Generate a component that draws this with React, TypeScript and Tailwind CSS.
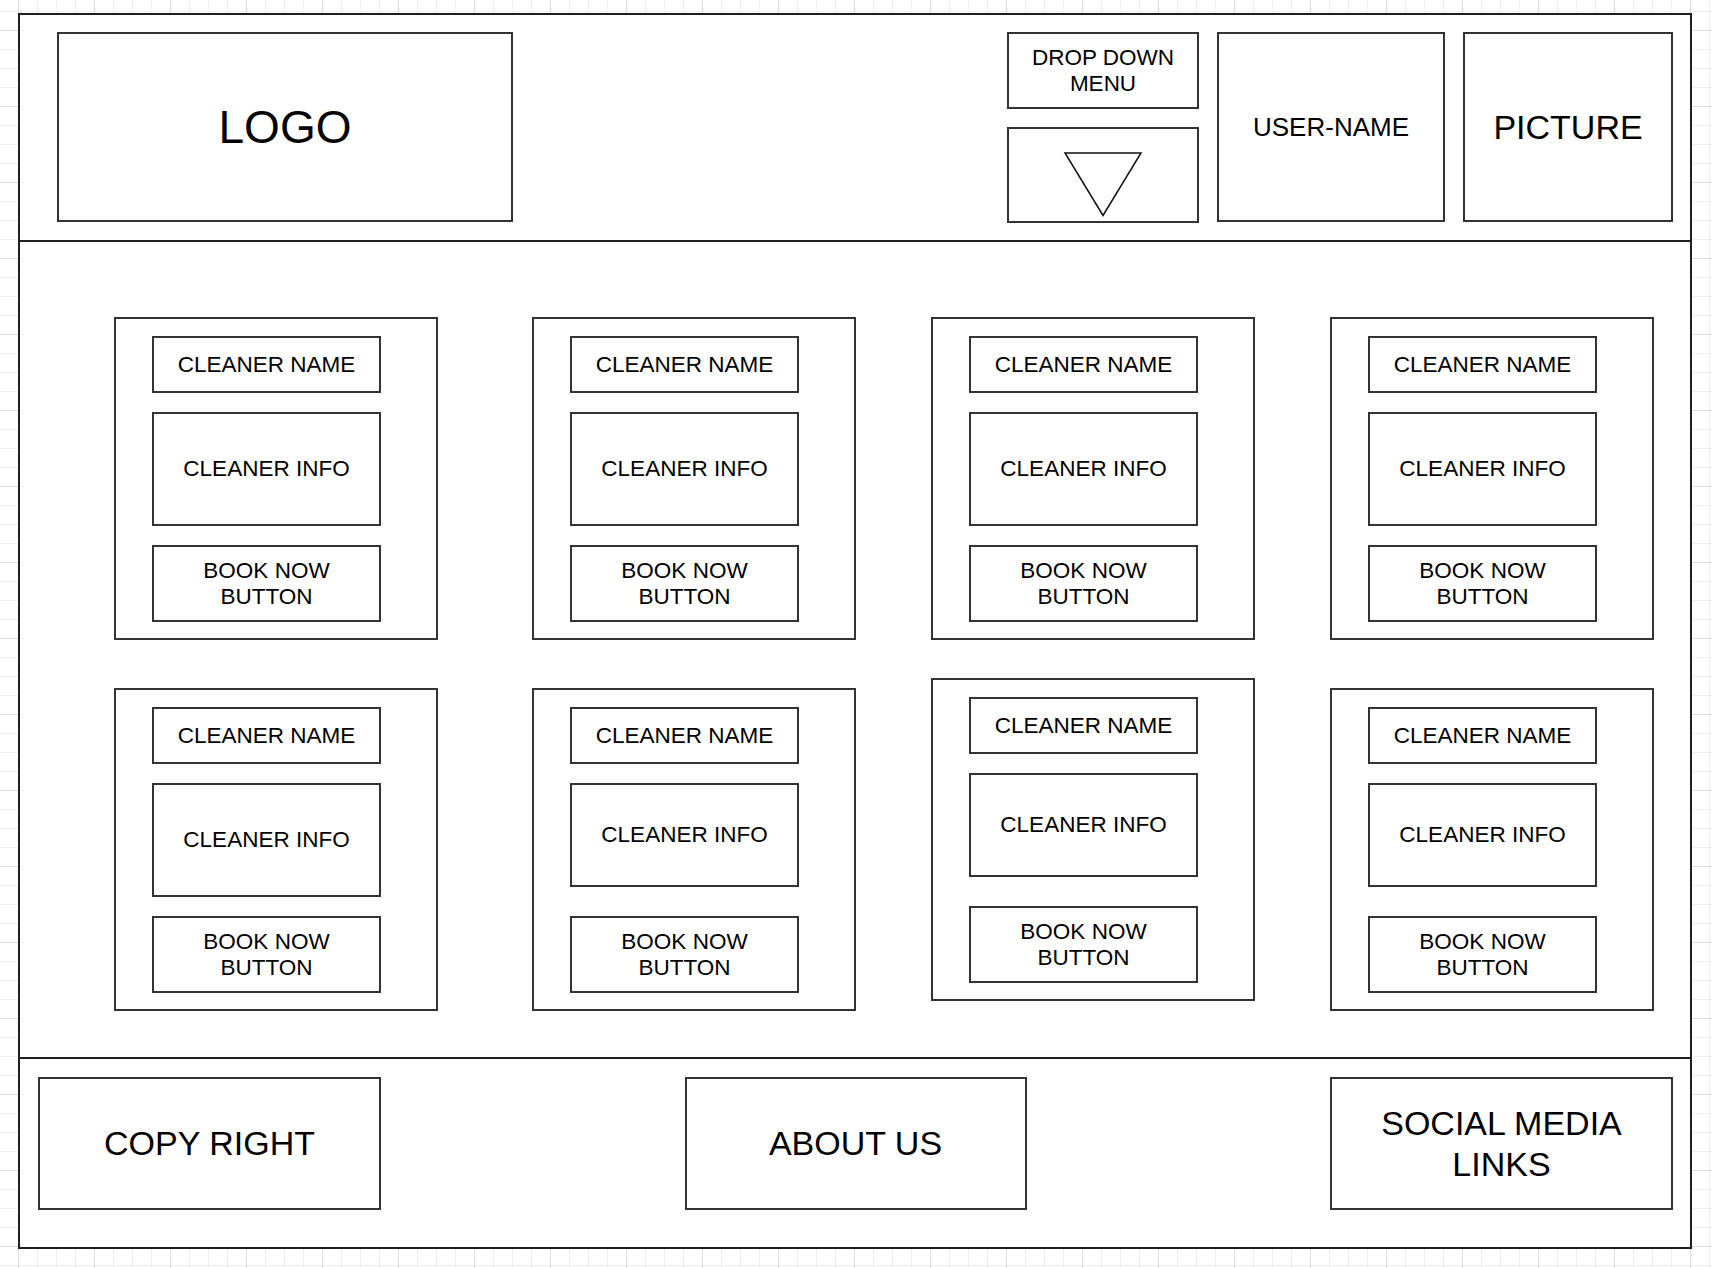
import React from "react";

type CardProps = {
  infoHeight: string;
  extra: string;
};

const boxText = "flex items-center justify-center text-center text-black";

const CleanerCard = ({ infoHeight, extra }: CardProps) => {
  return (
    <div
      className={`flex h-[323px] w-[324px] shrink-0 flex-col border-2 border-[#333] bg-white pb-[16px] pl-[36px] pt-[17px] ${extra}`}
    >
      <div className={`${boxText} h-[57px] w-[229px] border-2 border-[#333] text-[22.5px]`}>
        CLEANER NAME
      </div>
      <div
        className={`${boxText} mt-[19px] w-[229px] border-2 border-[#333] text-[22.5px] ${infoHeight}`}
      >
        CLEANER INFO
      </div>
      <div
        className={`${boxText} mt-auto h-[77px] w-[229px] border-2 border-[#333] text-[22.5px] leading-[26px]`}
      >
        BOOK NOW
        <br />
        BUTTON
      </div>
    </div>
  );
};

// one entry per card: info box height + margins to match the mockup spacing
const topRow: CardProps[] = [
  { infoHeight: "h-[114px]", extra: "" },
  { infoHeight: "h-[114px]", extra: "ml-[19px]" },
  { infoHeight: "h-[114px]", extra: "" },
  { infoHeight: "h-[114px]", extra: "" },
];

const bottomRow: CardProps[] = [
  { infoHeight: "h-[114px]", extra: "mt-[10px]" },
  { infoHeight: "h-[104px]", extra: "ml-[19px] mt-[10px]" },
  { infoHeight: "h-[104px]", extra: "" },
  { infoHeight: "h-[104px]", extra: "mt-[10px]" },
];

const App = () => {
  return (
    <div
      className="min-h-[1268px] w-full bg-white bg-[linear-gradient(to_right,#dcdcdc_1px,transparent_1px),linear-gradient(to_bottom,#dcdcdc_1px,transparent_1px),linear-gradient(to_right,#efefef_1px,transparent_1px),linear-gradient(to_bottom,#efefef_1px,transparent_1px)] bg-size-[76px_76px,76px_76px,19px_19px,19px_19px] bg-position-[18px_30px] pl-[18px] pt-[13px]"
      style={{ fontFamily: '"Liberation Sans", Arial, Helvetica, sans-serif' }}
    >
      <div className="flex h-[1236px] w-[1674px] flex-col border-2 border-[#1f1f1f] bg-white">
        {/* header */}
        <header className="flex h-[227px] shrink-0 items-start justify-between border-b-2 border-[#1f1f1f] pl-[37px] pr-[17px] pt-[17px]">
          <div className={`${boxText} h-[190px] w-[456px] border-2 border-[#333] text-[46px]`}>
            LOGO
          </div>
          <div className="flex gap-[18px]">
            <div className="flex w-[192px] flex-col gap-[18px]">
              <div
                className={`${boxText} h-[77px] border-2 border-[#333] text-[22.5px] leading-[26px]`}
              >
                DROP DOWN
                <br />
                MENU
              </div>
              <div className="flex h-[96px] justify-center border-2 border-[#333] pt-[22px]">
                <svg width="80" height="66" viewBox="0 0 80 66" fill="none">
                  <polygon
                    points="2,2 78,2 40,64.5"
                    stroke="#111"
                    strokeWidth="1.5"
                    strokeLinejoin="miter"
                  />
                </svg>
              </div>
            </div>
            <div className={`${boxText} h-[190px] w-[228px] border-2 border-[#333] text-[26px]`}>
              USER-NAME
            </div>
            <div className={`${boxText} h-[190px] w-[210px] border-2 border-[#333] text-[34px]`}>
              PICTURE
            </div>
          </div>
        </header>

        {/* cleaners */}
        <main className="flex h-[815px] shrink-0 flex-col pl-[94px] pt-[75px]">
          <div className="flex items-start gap-[75px]">
            {topRow.map((card, i) => (
              <CleanerCard key={i} {...card} />
            ))}
          </div>
          <div className="mt-[38px] flex items-start gap-[75px]">
            {bottomRow.map((card, i) => (
              <CleanerCard key={i} {...card} />
            ))}
          </div>
        </main>

        {/* footer */}
        <footer className="flex flex-1 items-start justify-between border-t-2 border-[#1f1f1f] pl-[18px] pr-[17px] pt-[18px]">
          <div className={`${boxText} h-[133px] w-[343px] border-2 border-[#333] text-[34px]`}>
            COPY RIGHT
          </div>
          <div className={`${boxText} h-[133px] w-[342px] border-2 border-[#333] text-[34px]`}>
            ABOUT US
          </div>
          <div
            className={`${boxText} h-[133px] w-[343px] border-2 border-[#333] text-[34px] leading-[41px]`}
          >
            SOCIAL MEDIA
            <br />
            LINKS
          </div>
        </footer>
      </div>
    </div>
  );
};

export default App;
